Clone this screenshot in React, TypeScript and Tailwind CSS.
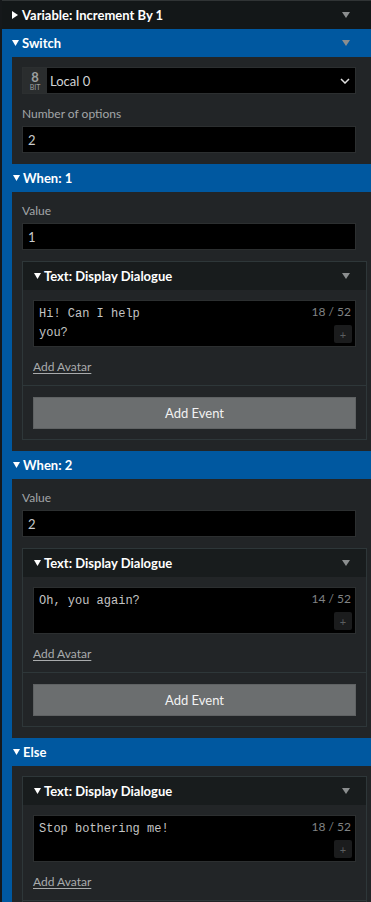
import React from 'react';

const BLUE = 'bg-[#0058a0]';

const Caret = () => (
  <svg width="8" height="6" viewBox="0 0 8 6" className="shrink-0">
    <path d="M0 0h8L4 6z" fill="#8b8e8f" />
  </svg>
);

const Tri = ({ open }: { open: boolean }) =>
  open ? (
    <svg width="7" height="6" viewBox="0 0 7 6" className="shrink-0">
      <path d="M0 0h7L3.5 6z" fill="#fff" />
    </svg>
  ) : (
    <svg width="6" height="8" viewBox="0 0 6 8" className="shrink-0">
      <path d="M0 0l6 4-6 4z" fill="#fff" />
    </svg>
  );

const Label = ({ children, className = '' }: { children: React.ReactNode; className?: string }) => (
  <div className={`text-[12px] leading-[16px] text-[#a3a6a7] ${className}`}>{children}</div>
);

const Input = ({ value }: { value: string }) => (
  <div className="mt-[4px] h-[27px] border border-[#2c2f30] bg-black flex items-center px-[5px] pt-[2px] text-[13px] text-[#c9cbcc]">
    {value}
  </div>
);

const DialogueEvent = ({ text, count, className = 'mt-[11px]' }: { text: React.ReactNode; count: string; className?: string }) => (
  <div className={`${className} -mr-[11px] border border-[#2e3739] flex flex-col`}>
    <div className="h-[28px] bg-[#181c1d] flex items-center pl-[11px] pr-[16px]">
      <Tri open />
      <span className="ml-[3px] pt-[2px] flex-1 text-[13px] font-bold text-white">Text: Display Dialogue</span>
      <Caret />
    </div>
    <div className="px-[10px] pt-[10px] pb-[10px]">
      <div className="relative h-[47px] border border-[#2c2f30] bg-black pl-[5px] pt-[4px] font-['Liberation_Mono',monospace] text-[12px] leading-[19px] text-[#c4c4c4]">
        {text}
        <span className="absolute top-[4px] right-[4px] font-['Lato',sans-serif] text-[12px] leading-[14px] text-[#808384]">{count}</span>
        <span className="absolute bottom-[3px] right-[3px] w-[18px] h-[18px] rounded-[2px] bg-[#1b1c1d] flex items-center justify-center font-['Lato',sans-serif] text-[11px] text-[#5b5e5f]">+</span>
      </div>
      <div className="mt-[11px] pt-[1px] text-[12px] leading-[16px] text-[#a9abac] underline underline-offset-2">Add Avatar</div>
    </div>
    <div className="border-t border-[#2e3739] px-[10px] pt-[11px] pb-[10px]">
      <div className="h-[32px] bg-[#6b6e6f] border border-[#5f6263] flex items-center justify-center pt-[2px] text-[13px] text-[#f2f2f2]">
        Add Event
      </div>
    </div>
  </div>
);

const SubHeader = ({ title }: { title: string }) => (
  <div className={`h-[28px] ${BLUE} flex items-center pl-[1px]`}>
    <Tri open />
    <span className="ml-[3px] pt-[2px] text-[13px] font-bold text-white">{title}</span>
  </div>
);

export default function App() {
  return (
    <div className="min-h-screen bg-[#222527] font-['Lato',sans-serif]">
      <div className="border-l-2 border-[#15181a]">
        {/* Variable event, collapsed */}
        <div className="h-[29px] border-t border-[#303435] bg-[#131718] flex items-center pl-[10px] pr-[21px]">
          <Tri open={false} />
          <span className="ml-[4px] pt-[2px] flex-1 text-[13px] font-bold text-white">Variable: Increment By 1</span>
          <Caret />
        </div>

        {/* Switch */}
        <div className={`h-[28px] ${BLUE} flex items-center pl-[10px] pr-[21px]`}>
          <Tri open />
          <span className="ml-[3px] pt-[2px] flex-1 text-[13px] font-bold text-white">Switch</span>
          <Caret />
        </div>
        <div className="border-l-[10px] border-[#0058a0]">
          <div className="pl-[10px] pr-[15px] pt-[10px] pb-[11px]">
            <div className="h-[27px] border border-[#2c2f30] bg-black flex items-stretch">
              <div className="w-[24px] bg-[#2a2d2e] flex flex-col items-center justify-center text-[#9c9fa0]">
                <span className="text-[13px] font-bold leading-[12px]">8</span>
                <span className="text-[7px] leading-[8px]">BIT</span>
              </div>
              <span className="flex-1 flex items-center pl-[3px] pt-[2px] text-[13px] text-[#d2d4d5]">Local 0</span>
              <svg width="10" height="6" viewBox="0 0 10 6" className="self-center mr-[5px]">
                <path d="M1 1l4 4 4-4" stroke="#e0e0e0" strokeWidth="1.5" fill="none" />
              </svg>
            </div>
            <Label className="mt-[12px]">Number of options</Label>
            <Input value="2" />
          </div>

          <SubHeader title="When: 1" />
          <div className="pl-[10px] pr-[15px] pt-[11px] pb-[11px]">
            <Label>Value</Label>
            <Input value="1" />
            <DialogueEvent text={<>Hi! Can I help<br />you?</>} count="18 / 52" />
          </div>

          <SubHeader title="When: 2" />
          <div className="pl-[10px] pr-[15px] pt-[11px] pb-[11px]">
            <Label>Value</Label>
            <Input value="2" />
            <DialogueEvent text="Oh, you again?" count="14 / 52" />
          </div>

          <SubHeader title="Else" />
          <div className="pl-[10px] pr-[15px] pt-[10px] pb-[10px]">
            <DialogueEvent className="" text="Stop bothering me!" count="18 / 52" />
          </div>
        </div>
      </div>
    </div>
  );
}
